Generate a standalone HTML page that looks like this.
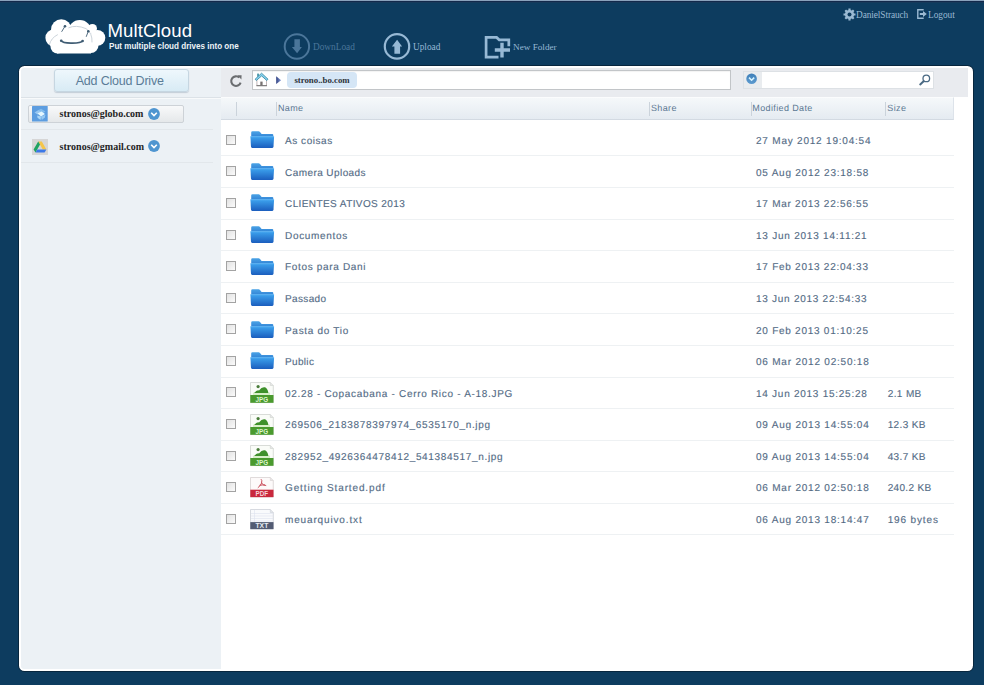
<!DOCTYPE html>
<html><head><meta charset="utf-8">
<style>
*{margin:0;padding:0;box-sizing:border-box}
html,body{width:984px;height:685px;overflow:hidden}
body{background:#0d3c5f;position:relative;font-family:"Liberation Sans",sans-serif}
.row div,.htx{text-rendering:geometricPrecision}
.abs{position:absolute}
.serif{font-family:"Liberation Serif",serif}
#panel{left:19px;top:66px;width:954px;height:605px;background:#fff;border-radius:5.5px;box-shadow:0 0 0 1px rgba(6,28,48,.7)}
#side{left:21px;top:68px;width:200px;height:600.5px;background:#ecf1f5;border-radius:3px 0 0 3px}
#tb{left:221px;top:68px;width:747px;height:29px;background:#e9ebef}
#hdr{left:221px;top:97px;width:732.5px;height:22.5px;background:linear-gradient(#f5f8fa,#e5ebf1);border-top:1px solid #fbfcfd;border-bottom:1px solid #d3dae2;border-right:1px solid #dde3ea}
.hsep{position:absolute;top:102px;width:1px;height:14px;background:#cbd3db}
.htx{position:absolute;top:102.5px;font-size:9px;line-height:11px;color:#5b7893;letter-spacing:0.37px;white-space:nowrap}
#addbtn{left:53.5px;top:69px;width:135px;height:23.2px;border:1px solid #c6d6e1;border-radius:3px;background:linear-gradient(#eef7fc,#d8ebf5);box-shadow:0 1px 1px rgba(120,140,160,.35);font-size:12.5px;color:#5a7c97;text-align:center;line-height:23px;letter-spacing:-0.2px;text-indent:-2.5px}
.acc{left:28.3px;top:105px;width:155.5px;height:18.3px;border:1px solid #cdd2d7;border-radius:2px;background:linear-gradient(#f8f9fa,#e5e8ea)}
.accname{left:59.6px;font-family:"Liberation Serif",serif;font-weight:bold;font-size:10px;color:#1f1f1f;line-height:12px;white-space:nowrap;letter-spacing:0px}
.hl{position:absolute;height:1px}
#crumb{left:252px;top:70px;width:479px;height:20px;border:1px solid #c2c5c8;background:#fff;box-shadow:inset 0 1px 1px rgba(0,0,0,.05)}
#pill{left:286.9px;top:72.3px;width:70.3px;height:15.6px;border-radius:4px;background:#d5e6f6;font-family:"Liberation Serif",serif;font-weight:bold;font-size:8.8px;color:#2d333a;text-align:center;line-height:16.2px;letter-spacing:0px}
#search{left:743.3px;top:70.5px;width:191px;height:18px;border:1px solid #dde1e5;background:#fff}
.row{position:absolute;left:221px;width:733px;height:31.58px;border-bottom:1px solid #eef1f3}
.cb{position:absolute;left:5px;top:9.9px;width:10px;height:10px;border:1px solid #a3a3a3;background:linear-gradient(135deg,#e2e2e2,#fbfbfb)}
.ic{position:absolute;left:29.4px;top:5px}
.nm{position:absolute;left:64px;top:11.2px;line-height:12px;font-size:10px;color:#4f6782;white-space:nowrap;-webkit-text-stroke:0.15px #6a7f96}
.dt{position:absolute;left:535px;top:11.2px;line-height:12px;font-size:10px;color:#4f6782;white-space:nowrap;-webkit-text-stroke:0.15px #6a7f96}
.sz{position:absolute;left:666.7px;top:11.2px;line-height:12px;font-size:10px;color:#4f6782;white-space:nowrap;-webkit-text-stroke:0.15px #6a7f96}
</style></head><body>
<svg width="0" height="0" style="position:absolute">
<defs>
 <linearGradient id="gf" x1="0" y1="0" x2="0" y2="1"><stop offset="0" stop-color="#3da3ee"/><stop offset="1" stop-color="#1b5ebe"/></linearGradient>
 <linearGradient id="gb" x1="0" y1="0" x2="0" y2="1"><stop offset="0" stop-color="#4aa3e6"/><stop offset="1" stop-color="#2a78cf"/></linearGradient>
 <symbol id="i-folder" viewBox="0 0 25 22">
  <path d="M1.2 1.6 Q1.2 0.3 2.5 0.3 H8.6 Q9.4 0.3 10 1 L11.6 2.9 H22.2 Q23.3 2.9 23.3 4 V8 H1.2 Z" fill="url(#gb)"/>
  <path d="M0.4 5.6 H24.1 L23.5 15.8 Q23.4 16.9 22.3 16.9 H2.2 Q1.1 16.9 1 15.8 Z" fill="url(#gf)"/>
  <path d="M0.5 5.7 H24" stroke="#6cbdf5" stroke-width="0.8"/>
 </symbol>
 <symbol id="i-jpg" viewBox="0 0 25 22">
  <path d="M0.5 0.5 H20.3 L23.3 3.5 V20.6 H0.5 Z" fill="#fafcf8" stroke="#cfd3cf" stroke-width="0.8"/>
  <path d="M20.3 0.5 V3.5 H23.3" fill="#e6e6e6" stroke="#cfd3cf" stroke-width="0.6"/>
  <rect x="3" y="10.6" width="17" height="2.4" fill="#d8efc8"/>
  <circle cx="8.1" cy="4.6" r="1.6" fill="#4a7d3a"/>
  <path d="M4.3 10.9 Q6.5 7.8 9 8.4 Q12 4.4 15 5.3 Q17.6 6.5 18.4 10.9 Z" fill="#3f912b"/>
  <rect x="0.3" y="13" width="23.2" height="7.8" fill="#4a9a2e"/>
  <text x="11.9" y="19.6" font-family="Liberation Sans" font-size="6.3" fill="#dff5cf" text-anchor="middle" font-weight="bold">JPG</text>
 </symbol>
 <symbol id="i-pdf" viewBox="0 0 25 22">
  <path d="M0.5 0.5 H20.3 L23.3 3.5 V20.1 H0.5 Z" fill="#fdfafa" stroke="#d8d2d2" stroke-width="0.8"/>
  <path d="M20.3 0.5 V3.5 H23.3" fill="#e6e6e6" stroke="#d8d2d2" stroke-width="0.6"/>
  <path d="M11 2.2 Q12.3 3 11.6 6 Q10.8 8.5 7.8 10.8 M11.6 6 Q13 8.2 16.2 8.6 M9.5 8.3 Q12.5 7.8 15 8" stroke="#c43c4b" stroke-width="0.9" fill="none"/>
  <rect x="0.3" y="12.7" width="23.2" height="7.4" fill="#c9283d"/>
  <text x="11.9" y="19" font-family="Liberation Sans" font-size="6.3" fill="#f7d4d8" text-anchor="middle" font-weight="bold">PDF</text>
 </symbol>
 <symbol id="i-txt" viewBox="0 0 25 22">
  <path d="M0.5 0.5 H20.3 L23.3 3.5 V20.1 H0.5 Z" fill="#f9fafc" stroke="#cdd1d8" stroke-width="0.8"/>
  <path d="M20.3 0.5 V3.5 H23.3" fill="#e3e5ea" stroke="#cdd1d8" stroke-width="0.6"/>
  <path d="M1 4.5 H23 M1 7 H23 M1 9.5 H23 M1 12 H23 M4.5 1 V13" stroke="#dde3ee" stroke-width="0.6"/>
  <rect x="0.3" y="13.1" width="23.2" height="7" fill="#525b73"/>
  <text x="11.9" y="19.4" font-family="Liberation Sans" font-size="6.8" fill="#e8ebf2" text-anchor="middle" font-weight="bold">TXT</text>
 </symbol>
</defs></svg>
<div class="abs" style="left:0;top:0;width:984px;height:1px;background:#8aa2bc"></div>
<div class="abs" style="left:0;top:1px;width:984px;height:1px;background:#13294b"></div>
<div class="abs" style="left:0;top:2px;width:984px;height:1px;background:#163a5b"></div>

<!-- logo -->
<svg class="abs" style="left:40px;top:14px" width="70" height="44" viewBox="40 14 70 44">
  <g fill="#fff">
    <circle cx="61.3" cy="29.5" r="10.2"/>
    <circle cx="79.8" cy="31.8" r="11.7"/>
    <circle cx="92.4" cy="28.6" r="4.6"/>
    <circle cx="97.4" cy="37.8" r="7.9"/>
    <circle cx="54" cy="37.8" r="8.6"/>
    <circle cx="57.5" cy="46.5" r="7"/>
    <circle cx="91" cy="45.5" r="7.5"/>
    <rect x="57" y="36" width="34" height="17.5"/>
  </g>
  <path d="M49.4 44.8 Q51 38 57.8 34.6" stroke="#c5ced6" stroke-width="0.9" fill="none"/>
  <path d="M68.4 27.9 Q76 24.5 86 28.6 Q92.5 33 92 42.4" stroke="#c5ced6" stroke-width="0.9" fill="none"/>
  <path d="M61.2 40.7 Q62.5 43.2 71.6 43.1 Q81 43.2 82.6 41" stroke="#3f5c73" stroke-width="1.6" fill="none" stroke-linecap="round"/>
  <circle cx="61.2" cy="40.7" r="1.3" fill="#3f5c73"/><circle cx="82.6" cy="41" r="1.3" fill="#3f5c73"/>
  <path d="M65 26.2 L61.6 31.8" stroke="#3f5c73" stroke-width="0.9" fill="none"/>
  <circle cx="65" cy="26.2" r="1.3" fill="#3f5c73"/>
  <path d="M88.3 31.2 L86.2 36.8" stroke="#3f5c73" stroke-width="0.9" fill="none"/>
  <circle cx="88.3" cy="31.2" r="1.3" fill="#3f5c73"/>
</svg>
<div class="abs" style="left:107.5px;top:20.3px;font-size:18.6px;color:#fff;letter-spacing:0.1px">MultCloud</div>
<div class="abs" style="left:108.5px;top:40px;font-size:9.5px;font-weight:bold;color:#eef3f7;white-space:nowrap;transform-origin:0 0;transform:scaleX(0.85)">Put multiple cloud drives into one</div>

<!-- toolbar buttons -->
<svg class="abs" style="left:280px;top:30px" width="34" height="34" viewBox="280 30 34 34">
  <circle cx="296.9" cy="46.5" r="12.2" stroke="#4b769a" stroke-width="2" fill="none"/>
  <path d="M294.4 39.2 H299.9 V47.1 H301.9 L297.1 53.3 L291.9 47.1 H294.4 Z" fill="#4b769a"/>
</svg>
<div class="abs serif" style="left:313px;top:42.3px;font-size:9.3px;color:#4b769a;white-space:nowrap">DownLoad</div>
<svg class="abs" style="left:380px;top:30px" width="34" height="34" viewBox="380 30 34 34">
  <circle cx="397" cy="46.4" r="12.2" stroke="#97b9d5" stroke-width="2.2" fill="none"/>
  <path d="M397.1 39.7 L402.1 46.4 H400.1 V53.8 H394.4 V46.4 H391.9 Z" fill="#97b9d5"/>
</svg>
<div class="abs serif" style="left:413px;top:42.3px;font-size:9.3px;color:#97b9d5;white-space:nowrap">Upload</div>
<svg class="abs" style="left:480px;top:30px" width="34" height="34" viewBox="480 30 34 34">
  <path d="M498.5 57.2 H486.1 V37.4 H496.6 L499.2 39.8 H508.8 V46.2" stroke="#97b9d5" stroke-width="2.7" fill="none"/>
  <path d="M494.8 50 H510 M502 42.8 V57.5" stroke="#97b9d5" stroke-width="3.4" fill="none"/>
</svg>
<div class="abs serif" style="left:513px;top:42.3px;font-size:9.2px;color:#97b9d5;white-space:nowrap">New Folder</div>

<!-- user -->
<svg class="abs" style="left:842.5px;top:8.3px" width="14" height="14" viewBox="0 0 14 14">
  <g fill="#9bbad3"><circle cx="6.5" cy="6.5" r="4.6"/>
  <g stroke="#9bbad3" stroke-width="2.2"><path d="M6.5 0.5V12.5M0.5 6.5H12.5M2.3 2.3L10.7 10.7M10.7 2.3L2.3 10.7"/></g></g>
  <circle cx="6.5" cy="6.5" r="2" fill="#0d3c5f"/>
</svg>
<div class="abs serif" style="left:856px;top:9.8px;font-size:9.35px;color:#9bbad3;white-space:nowrap;letter-spacing:-0.1px">DanielStrauch</div>
<svg class="abs" style="left:916px;top:8px" width="12" height="12" viewBox="0 0 12 12">
  <path d="M7 2.5V1.8H1.8V10.2H7V9.5" stroke="#9bbad3" stroke-width="1.4" fill="none"/>
  <path d="M3.8 5H7V3L10.8 6L7 9V7H3.8Z" fill="#9bbad3"/>
</svg>
<div class="abs serif" style="left:928px;top:9.8px;font-size:9.3px;color:#9bbad3;white-space:nowrap">Logout</div>

<!-- panel -->
<div class="abs" id="panel"></div>
<div class="abs" id="side"></div>
<div class="abs" id="addbtn">Add Cloud Drive</div>
<div class="hl" style="left:21px;top:97px;width:200px;background:#dce2e7"></div>
<div class="hl" style="left:21px;top:98px;width:200px;background:#f8fafb"></div>
<div class="abs acc"></div>
<div class="hl" style="left:21px;top:129px;width:192px;background:#e2e7eb"></div>
<div class="hl" style="left:21px;top:161.5px;width:192px;background:#e2e7eb"></div>
<svg class="abs" style="left:32.2px;top:106px" width="16" height="16" viewBox="0 0 16 16">
  <rect x="0" y="0" width="15.7" height="15.5" rx="0.6" fill="#5c9de0"/>
  <path d="M2.5 6.5 L6.5 4 L9.5 6 L5.5 8.5 Z" fill="#a9d3f5" opacity=".8"/>
  <path d="M6.5 4 L9 2.8 L13.5 5.5 L10.5 7.5 Z" fill="#8cc4f0" opacity=".8"/>
  <path d="M5.5 7.5 L9.5 5.5 L13 8 L9 10.5 Z" fill="#e4f7ff"/>
  <path d="M9 10.5 L9.8 14 L12.8 11.5 L13.5 8.8 Z" fill="#9fd0f5" opacity=".85"/>
  <path d="M9 10.5 L8.5 14 L5.5 11.8 L5.2 9.5 Z" fill="#b8e0fa" opacity=".85"/>
</svg>
<div class="abs accname" style="top:108.3px">stronos@globo.com</div>
<svg class="abs" style="left:147.7px;top:107.9px" width="12" height="12" viewBox="0 0 12 12"><circle cx="6" cy="6" r="5.9" fill="#4f95d0"/><path d="M3.2 4.8 L6 7.6 L8.8 4.8" stroke="#fff" stroke-width="1.6" fill="none"/></svg>
<svg class="abs" style="left:32px;top:138.5px" width="16" height="16" viewBox="0 0 16 16">
  <rect x="0" y="0" width="16" height="16" fill="#d6d6d6"/>
  <path d="M6.2 2.5 H9.8 L14.4 10.4 H10.8 Z" fill="#f5c64a"/>
  <path d="M6.2 2.5 L8 5.6 L3.5 13.4 L1.6 10.4 Z" fill="#1ea362"/>
  <path d="M3.5 13.4 L5.3 10.4 H14.4 L12.6 13.4 Z" fill="#3b78e7"/>
</svg>
<div class="abs accname" style="top:141px">stronos@gmail.com</div>
<svg class="abs" style="left:147.7px;top:140.4px" width="12" height="12" viewBox="0 0 12 12"><circle cx="6" cy="6" r="5.9" fill="#4f95d0"/><path d="M3.2 4.8 L6 7.6 L8.8 4.8" stroke="#fff" stroke-width="1.6" fill="none"/></svg>

<div class="abs" id="tb"></div>
<svg class="abs" style="left:229px;top:74px" width="14" height="14" viewBox="0 0 14 14">
  <path d="M10.3 3.6 A4.8 4.8 0 1 0 11.6 8.6" stroke="#6b6d70" stroke-width="2.1" fill="none"/>
  <path d="M8.3 1.2 L12.6 1.2 L12.4 5.6 Z" fill="#6b6d70"/>
</svg>
<div class="abs" id="crumb"></div>
<svg class="abs" style="left:253px;top:71px" width="18" height="18" viewBox="0 0 18 18">
  <path d="M3.9 8.6 V14.6 H13.5 V8.6" fill="#fff" stroke="#bcaeb0" stroke-width="0.9"/>
  <rect x="7.3" y="10.6" width="2.3" height="3.8" fill="#787372"/>
  <path d="M3.4 14.7 H14" stroke="#707070" stroke-width="1"/>
  <rect x="4.2" y="2.6" width="1.7" height="3.2" fill="#3f8fa6"/>
  <path d="M2.1 8.2 L8.6 2.2 L15 8.2 L13.8 9.5 L8.6 4.9 L3.3 9.5 Z" fill="#88d3f2" stroke="#3f8fa6" stroke-width="0.9" stroke-linejoin="round"/>
</svg>
<svg class="abs" style="left:276px;top:75.5px" width="6" height="9" viewBox="0 0 6 9"><defs><linearGradient id="ga" x1="0" y1="0" x2="1" y2="0"><stop offset="0" stop-color="#2d3f80"/><stop offset="1" stop-color="#8c9fd8"/></linearGradient></defs><path d="M0.2 0.2 L5.1 4.2 L0.2 8.1 Z" fill="url(#ga)"/></svg>
<div class="abs" id="pill">strono..bo.com</div>
<div class="abs" id="search"></div>
<div class="abs" style="left:744.3px;top:71.5px;width:17.5px;height:16px;background:#e9ecef"></div>
<svg class="abs" style="left:746.1px;top:73.1px" width="12" height="12" viewBox="0 0 12 12"><defs><linearGradient id="gc" x1="0" y1="0" x2="0" y2="1"><stop offset="0" stop-color="#3f7fb8"/><stop offset="1" stop-color="#5d9bd0"/></linearGradient></defs><circle cx="5.6" cy="5.7" r="5.3" fill="url(#gc)"/><path d="M3 4.6 L5.6 7.2 L8.2 4.6" stroke="#d8f4ff" stroke-width="1.5" fill="none"/></svg>
<svg class="abs" style="left:917px;top:73px" width="14" height="14" viewBox="917 73 14 14"><circle cx="926.3" cy="78.4" r="3.3" stroke="#4a6a84" stroke-width="1.3" fill="none"/><path d="M923.6 81.2 L920.2 84.4" stroke="#4a6a84" stroke-width="2" stroke-linecap="round"/></svg>

<div class="abs" id="hdr"></div>
<div class="hsep" style="left:235.8px"></div>
<div class="hsep" style="left:276px"></div>
<div class="htx" style="left:278px">Name</div>
<div class="hsep" style="left:649px"></div>
<div class="htx" style="left:651px">Share</div>
<div class="hsep" style="left:751px"></div>
<div class="htx" style="left:752.3px">Modified Date</div>
<div class="hsep" style="left:885.3px"></div>
<div class="htx" style="left:887.3px">Size</div>

<!--ROWS-->
<div class="row" style="top:124.92px"><div class="cb"></div><svg class="ic" style="top:6.3px" width="25" height="22"><use href="#i-folder"/></svg><div class="nm" style="letter-spacing:0.551px">As coisas</div><div class="dt" style="letter-spacing:0.786px">27 May 2012 19:04:54</div></div>
<div class="row" style="top:156.50px"><div class="cb"></div><svg class="ic" style="top:6.3px" width="25" height="22"><use href="#i-folder"/></svg><div class="nm" style="letter-spacing:0.428px">Camera Uploads</div><div class="dt" style="letter-spacing:0.76px">05 Aug 2012 23:18:58</div></div>
<div class="row" style="top:188.08px"><div class="cb"></div><svg class="ic" style="top:6.3px" width="25" height="22"><use href="#i-folder"/></svg><div class="nm" style="letter-spacing:0.407px">CLIENTES ATIVOS 2013</div><div class="dt" style="letter-spacing:0.743px">17 Mar 2013 22:56:55</div></div>
<div class="row" style="top:219.66px"><div class="cb"></div><svg class="ic" style="top:6.3px" width="25" height="22"><use href="#i-folder"/></svg><div class="nm" style="letter-spacing:0.685px">Documentos</div><div class="dt" style="letter-spacing:0.771px">13 Jun 2013 14:11:21</div></div>
<div class="row" style="top:251.24px"><div class="cb"></div><svg class="ic" style="top:6.3px" width="25" height="22"><use href="#i-folder"/></svg><div class="nm" style="letter-spacing:0.67px">Fotos para Dani</div><div class="dt" style="letter-spacing:0.742px">17 Feb 2013 22:04:33</div></div>
<div class="row" style="top:282.82px"><div class="cb"></div><svg class="ic" style="top:6.3px" width="25" height="22"><use href="#i-folder"/></svg><div class="nm" style="letter-spacing:0.358px">Passado</div><div class="dt" style="letter-spacing:0.732px">13 Jun 2013 22:54:33</div></div>
<div class="row" style="top:314.40px"><div class="cb"></div><svg class="ic" style="top:6.3px" width="25" height="22"><use href="#i-folder"/></svg><div class="nm" style="letter-spacing:0.699px">Pasta do Tio</div><div class="dt" style="letter-spacing:0.742px">20 Feb 2013 01:10:25</div></div>
<div class="row" style="top:345.98px"><div class="cb"></div><svg class="ic" style="top:6.3px" width="25" height="22"><use href="#i-folder"/></svg><div class="nm" style="letter-spacing:0.333px">Public</div><div class="dt" style="letter-spacing:0.785px">06 Mar 2012 02:50:18</div></div>
<div class="row" style="top:377.56px"><div class="cb"></div><svg class="ic" style="top:4.6px" width="25" height="22"><use href="#i-jpg"/></svg><div class="nm" style="letter-spacing:0.691px">02.28 - Copacabana - Cerro Rico - A-18.JPG</div><div class="dt" style="letter-spacing:0.737px">14 Jun 2013 15:25:28</div><div class="sz" style="letter-spacing:0.378px">2.1 MB</div></div>
<div class="row" style="top:409.14px"><div class="cb"></div><svg class="ic" style="top:4.6px" width="25" height="22"><use href="#i-jpg"/></svg><div class="nm" style="letter-spacing:0.669px">269506_2183878397974_6535170_n.jpg</div><div class="dt" style="letter-spacing:0.781px">09 Aug 2013 14:55:04</div><div class="sz" style="letter-spacing:0.348px">12.3 KB</div></div>
<div class="row" style="top:440.72px"><div class="cb"></div><svg class="ic" style="top:4.6px" width="25" height="22"><use href="#i-jpg"/></svg><div class="nm" style="letter-spacing:0.671px">282952_4926364478412_541384517_n.jpg</div><div class="dt" style="letter-spacing:0.781px">09 Aug 2013 14:55:04</div><div class="sz" style="letter-spacing:0.348px">43.7 KB</div></div>
<div class="row" style="top:472.30px"><div class="cb"></div><svg class="ic" style="top:5.2px" width="25" height="22"><use href="#i-pdf"/></svg><div class="nm" style="letter-spacing:0.874px">Getting Started.pdf</div><div class="dt" style="letter-spacing:0.785px">06 Mar 2012 02:50:18</div><div class="sz" style="letter-spacing:0.332px">240.2 KB</div></div>
<div class="row" style="top:503.88px"><div class="cb"></div><svg class="ic" style="top:4.7px" width="25" height="22"><use href="#i-txt"/></svg><div class="nm" style="letter-spacing:0.853px">meuarquivo.txt</div><div class="dt" style="letter-spacing:0.781px">06 Aug 2013 18:14:47</div><div class="sz" style="letter-spacing:0.854px">196 bytes</div></div>
<!--/ROWS-->
</body></html>
